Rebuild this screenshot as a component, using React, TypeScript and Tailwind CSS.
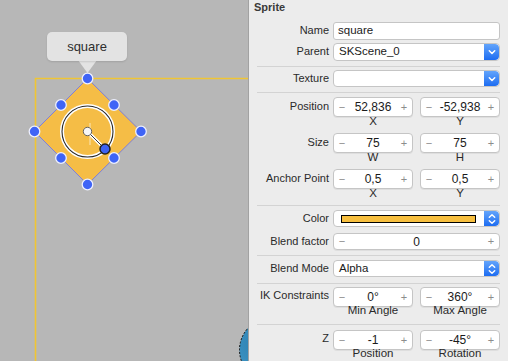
import React from "react";

const font = { fontFamily: '"Liberation Sans", Arial, sans-serif' };

const BlueBtn = ({ updown }: { updown?: boolean }) => (
  <div className="flex h-full w-[15px] shrink-0 items-center justify-center rounded-r-[4px] bg-linear-to-b from-[#62a4fb] to-[#1c6cf1]">
    {updown ? (
      <svg width="10" height="14" viewBox="0 0 10 14">
        <path d="M2.3 5.3L5 2.7l2.7 2.6M2.3 8.7L5 11.3l2.7-2.6" fill="none" stroke="white" strokeWidth="1.4" strokeLinecap="round" strokeLinejoin="round" />
      </svg>
    ) : (
      <svg width="10" height="10" viewBox="0 0 10 10">
        <path d="M2.3 3.8L5 6.5l2.7-2.7" fill="none" stroke="white" strokeWidth="1.5" strokeLinecap="round" strokeLinejoin="round" />
      </svg>
    )}
  </div>
);

const Stepper = ({ value }: { value: string }) => (
  <div className="flex h-full items-center justify-between rounded-[4px] border border-[#c5c5c5] bg-white px-[3px] shadow-[0_1px_0_rgba(0,0,0,0.06)]">
    <span className="w-[10px] text-center text-[11px] text-[#8c8c8c]">−</span>
    <span className="text-[12px] text-[#1a1a1a]">{value}</span>
    <span className="w-[10px] text-center text-[11px] text-[#8c8c8c]">+</span>
  </div>
);

const Row = ({
  label,
  className,
  children,
}: {
  label: string;
  className: string;
  children: React.ReactNode;
}) => (
  <div className={"flex items-center " + className}>
    <div className="w-[72px] shrink-0 whitespace-nowrap text-right text-[11px] text-[#2a2a2a]">{label}</div>
    <div className="ml-[4px] h-full w-[167px]">{children}</div>
  </div>
);

const Pair = ({ a, b }: { a: string; b: string }) => (
  <div className="grid h-full grid-cols-2 gap-[7px]">
    <Stepper value={a} />
    <Stepper value={b} />
  </div>
);

const Sub = ({ a, b, className }: { a: string; b: string; className: string }) => (
  <div className={"flex items-center " + className}>
    <div className="ml-[76px] grid w-[167px] grid-cols-2 gap-[7px] text-center text-[11.5px] text-[#2a2a2a]">
      <span>{a}</span>
      <span>{b}</span>
    </div>
  </div>
);

const Select = ({ value, updown }: { value: string; updown?: boolean }) => (
  <div className="flex h-full overflow-hidden rounded-[4px] border border-[#c5c5c5] bg-white">
    <div className="flex flex-1 items-center pl-[5px] text-[11.5px] text-[#1a1a1a]">{value}</div>
    <BlueBtn updown={updown} />
  </div>
);

const Sep = ({ className }: { className: string }) => <div className={"h-px bg-[#d3d3d3] " + className} />;

const handles: [number, number][] = [
  [87.5, 78.5],
  [34.5, 131.5],
  [141, 131.5],
  [87.5, 184.5],
  [61, 105],
  [114, 105],
  [61, 158],
  [114, 158],
];

export default function App() {
  return (
    <div className="flex h-[361px] w-[508px] overflow-hidden" style={font}>
      {/* CANVAS */}
      <div className="relative h-[361px] w-[248px] shrink-0 overflow-hidden bg-[#b7b7b7]">
        <svg className="absolute inset-0" width="248" height="361" viewBox="0 0 248 361">
          <defs>
            <radialGradient id="ball" cx="0.3" cy="0.4" r="0.7">
              <stop offset="0" stopColor="#2d7fb0" />
              <stop offset="0.75" stopColor="#3f97c6" />
              <stop offset="1" stopColor="#74bde0" />
            </radialGradient>
          </defs>
          <path d="M35.5 361V78.5H248" fill="none" stroke="#f0c534" strokeWidth="1.6" />
          <polygon points="87.5,60 78,60 87.5,73 97,60" fill="#e3e3e3" />
          <polygon points="87.5,78.5 141,131.5 87.5,184.5 34.5,131.5" fill="#f5bd46" stroke="#7f7fd8" strokeWidth="1" />
          <circle cx="87.5" cy="131.5" r="25.5" fill="none" stroke="#ffffff" strokeWidth="4" />
          <circle cx="87.5" cy="131.5" r="25.5" fill="none" stroke="#2a2a2a" strokeWidth="1.1" />
          <line x1="90" y1="123" x2="90" y2="145" stroke="#ffffff" strokeOpacity="0.8" strokeWidth="0.8" />
          <line x1="87.5" y1="131.5" x2="105" y2="149" stroke="#ffffff" strokeWidth="3.2" />
          <line x1="87.5" y1="131.5" x2="105" y2="149" stroke="#333" strokeWidth="1" />
          <circle cx="87.5" cy="131.5" r="4.2" fill="#f7f7f7" stroke="#555" strokeWidth="0.9" />
          <circle cx="105" cy="149" r="5" fill="#3d62f2" stroke="#222" strokeWidth="1.5" />
          {handles.map(([x, y], i) => (
            <circle key={i} cx={x} cy={y} r="5.3" fill="#3f64f6" stroke="#eef0ff" strokeWidth="1.3" />
          ))}
          <circle cx="272" cy="350" r="32.5" fill="url(#ball)" stroke="#111" strokeWidth="1" strokeDasharray="2 1.5" />
        </svg>
        <div className="absolute left-[47px] top-[32px] flex h-[29px] w-[80px] items-center justify-center rounded-[5px] bg-[#e3e3e3] text-[13px] text-[#2e2e2e] shadow-[0_1px_2px_rgba(0,0,0,0.12)]">
          square
        </div>
      </div>

      {/* INSPECTOR */}
      <div className="flex h-[361px] flex-1 flex-col border-l border-[#a2a2a2] bg-[#ececec] px-2">
        <div className="-ml-[3px] h-[16px] text-[11px] font-bold leading-[15px] text-[#3a3a3a]">Sprite</div>

        <Row label="Name" className="mt-[6px] h-[18px]">
          <div className="flex h-full items-center rounded-[3px] border border-[#c5c5c5] bg-white pl-[4px] text-[11.5px] text-[#1a1a1a]">
            square
          </div>
        </Row>
        <Row label="Parent" className="mt-[3px] h-[18px]">
          <Select value="SKScene_0" />
        </Row>
        <Sep className="mt-[5px]" />
        <Row label="Texture" className="mt-[3px] h-[18px]">
          <Select value="" />
        </Row>
        <Sep className="mt-[5px]" />

        <Row label="Position" className="mt-[4px] h-[18px]">
          <Pair a="52,836" b="-52,938" />
        </Row>
        <Sub a="X" b="Y" className="h-[12px]" />
        <Row label="Size" className="mt-[6px] h-[18px]">
          <Pair a="75" b="75" />
        </Row>
        <Sub a="W" b="H" className="h-[12px]" />
        <Row label="Anchor Point" className="mt-[6px] h-[18px]">
          <Pair a="0,5" b="0,5" />
        </Row>
        <Sub a="X" b="Y" className="h-[12px]" />
        <Sep className="mt-[6px]" />

        <Row label="Color" className="mt-[4px] h-[17px]">
          <div className="flex h-full overflow-hidden rounded-[4px] border border-[#c5c5c5] bg-white">
            <div className="flex flex-1 items-center pl-[7px] pr-[8px]">
              <div className="h-[8px] w-full border border-black bg-[#f7bf3f]" />
            </div>
            <BlueBtn updown />
          </div>
        </Row>
        <Row label="Blend factor" className="mt-[6px] h-[17px]">
          <Stepper value="0" />
        </Row>
        <Sep className="mt-[5px]" />
        <Row label="Blend Mode" className="mt-[4px] h-[17px]">
          <Select value="Alpha" updown />
        </Row>
        <Sep className="mt-[6px]" />

        <Row label="IK Constraints" className="mt-[3px] h-[17px]">
          <Pair a="0°" b="360°" />
        </Row>
        <Sub a="Min Angle" b="Max Angle" className="h-[14px]" />
        <Sep className="mt-[6px]" />
        <Row label="Z" className="mt-[5px] h-[17px]">
          <Pair a="-1" b="-45°" />
        </Row>
        <Sub a="Position" b="Rotation" className="h-[14px]" />
      </div>
    </div>
  );
}
